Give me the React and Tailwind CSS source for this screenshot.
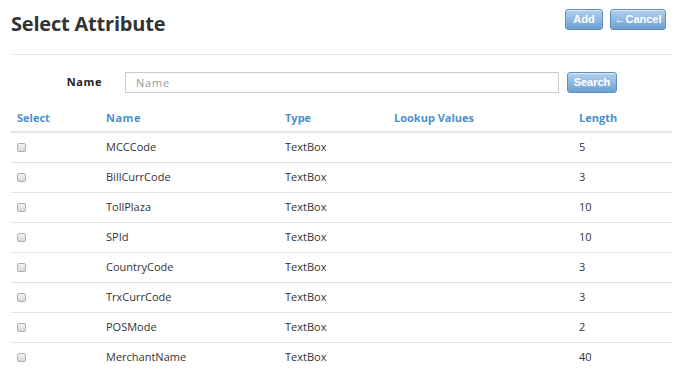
import React from "react";

const rows = [
  ["MCCCode", "TextBox", "", "5"],
  ["BillCurrCode", "TextBox", "", "3"],
  ["TollPlaza", "TextBox", "", "10"],
  ["SPId", "TextBox", "", "10"],
  ["CountryCode", "TextBox", "", "3"],
  ["TrxCurrCode", "TextBox", "", "3"],
  ["POSMode", "TextBox", "", "2"],
  ["MerchantName", "TextBox", "", "40"],
];

function Btn({ children, className = "" }) {
  return (
    <button
      className={
        "h-[21px] rounded-[3px] border border-[#5f8fbf] bg-gradient-to-b from-[#b4d1ef] to-[#6c9fd2] text-white font-bold text-[11px] leading-none font-['Liberation_Sans',Arial,sans-serif] shadow-[inset_0_1px_0_rgba(255,255,255,0.5)] " +
        className
      }
    >
      {children}
    </button>
  );
}

export default function App() {
  return (
    <div className="w-[675px] h-[371px] overflow-hidden bg-white font-['Open_Sans',sans-serif] text-[11px] text-[#333]">
      <div className="pl-[11px] pr-[3px]">
        <div className="flex justify-between items-start h-[55px] border-b border-[#e8e8e8]">
          <h1 className="mt-[10px] text-[20px] font-bold text-[#333] leading-[28px] tracking-[-0.2px]">Select Attribute</h1>
          <div className="flex gap-[7px] mt-[9px] mr-[6px]">
            <Btn className="w-[38px]">Add</Btn>
            <Btn className="w-[56px]">←Cancel</Btn>
          </div>
        </div>
        <div className="flex items-center mt-[16px] h-[22px]">
          <div className="w-[114px] text-right pr-[23px] font-bold text-[11px] tracking-[0.6px] text-[#222]">Name</div>
          <input
            placeholder="Name"
            className="w-[434px] h-[21px] border border-[#ccc] px-[10px] text-[11px] tracking-[0.8px] placeholder:text-[#999] outline-none"
          />
          <Btn className="ml-[8px] w-[50px]">Search</Btn>
        </div>
        <div className="mt-[10px]">
          <div className="grid grid-cols-[89px_179px_109px_185px_1fr] h-[30px] pt-[2px] items-center border-b-2 border-[#e4e4e4] text-[#4a8fd0] font-bold text-[11px]">
            <div className="pl-[6px]">Select</div>
            <div className="pl-[6px] tracking-[0.5px]">Name</div>
            <div className="pl-[6px]">Type</div>
            <div className="pl-[6px]">Lookup Values</div>
            <div className="pl-[6px]">Length</div>
          </div>
          {rows.map((r, i) => (
            <div
              key={i}
              className="grid grid-cols-[89px_179px_109px_185px_1fr] h-[30px] items-center border-b border-[#e0e0e0] text-[11px]"
            >
              <div className="pl-[6px]">
                <span className="block w-[9px] h-[9px] rounded-[2px] border border-[#b0b0b0] bg-gradient-to-b from-[#f4f4f4] to-[#d8d8d8]" />
              </div>
              <div className="pl-[6px]">{r[0]}</div>
              <div className="pl-[6px]">{r[1]}</div>
              <div className="pl-[6px]">{r[2]}</div>
              <div className="pl-[6px]">{r[3]}</div>
            </div>
          ))}
        </div>
      </div>
    </div>
  );
}
